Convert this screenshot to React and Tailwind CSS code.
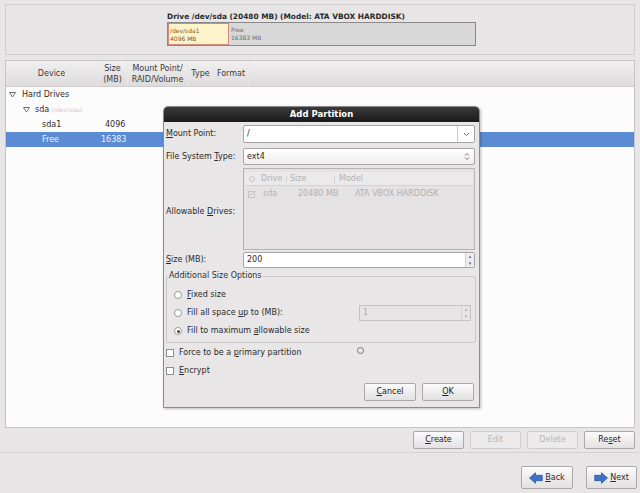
import React from "react";

function U({ children }) {
  return <span className="underline underline-offset-1">{children}</span>;
}

function Btn({ children, disabled, className = "" }) {
  return (
    <div
      className={`h-[18px] w-[51px] flex items-center justify-center rounded-[2px] border text-[8px] ${
        disabled
          ? "border-[#d0cece] bg-[#eceaea] text-[#b8b6b6]"
          : "border-[#a9a7a7] bg-gradient-to-b from-[#fbfbfb] to-[#e2e0e0] text-[#222]"
      } ${className}`}
    >
      {children}
    </div>
  );
}

function Radio({ checked }) {
  return (
    <div className="w-[8px] h-[8px] shrink-0 rounded-full border border-[#9a9898] bg-white flex items-center justify-center">
      {checked && <div className="w-[3px] h-[3px] rounded-full bg-[#444]" />}
    </div>
  );
}

function Check() {
  return <div className="w-[8px] h-[8px] shrink-0 border border-[#8f8d8d] bg-white" />;
}

function Tri() {
  return (
    <svg width="7" height="6" viewBox="0 0 7 6">
      <path d="M0.5 0.5 L6.5 0.5 L3.5 5 Z" fill="none" stroke="#6f6d6d" strokeWidth="1" />
    </svg>
  );
}

function UpDown() {
  return (
    <svg width="6" height="9" viewBox="0 0 6 9">
      <path d="M1 3.5 L3 1.5 L5 3.5 M1 5.5 L3 7.5 L5 5.5" fill="none" stroke="#666" strokeWidth="0.9" />
    </svg>
  );
}

function Arrow({ dir }) {
  return (
    <svg width="14" height="12" viewBox="0 0 14 12">
      {dir === "left" ? (
        <path d="M0.5 6 L6.5 0.7 L6.5 3.3 L13.3 3.3 L13.3 8.7 L6.5 8.7 L6.5 11.3 Z" fill="#3d73c7" stroke="#27529a" strokeWidth="0.7" strokeLinejoin="round" />
      ) : (
        <path d="M13.5 6 L7.5 0.7 L7.5 3.3 L0.7 3.3 L0.7 8.7 L7.5 8.7 L7.5 11.3 Z" fill="#3d73c7" stroke="#27529a" strokeWidth="0.7" strokeLinejoin="round" />
      )}
    </svg>
  );
}

function Dialog() {
  return (
    <div className="absolute left-[163px] top-[106px] w-[317px] h-[302px] flex flex-col bg-[#e8e6e6] border border-[#8d8b8b] rounded-t-[5px] shadow-[1px_1px_3px_rgba(0,0,0,0.25)]">
      <div className="h-[15px] bg-gradient-to-b from-[#3a3939] to-[#1c1b1b] rounded-t-[4px] flex items-center justify-center text-white font-bold text-[8.5px]">
        Add Partition
      </div>
      <div className="flex flex-col pl-[2px] pr-[4px] pt-[3px] whitespace-nowrap">
        <div className="flex items-center h-[18px]">
          <div className="w-[77px]"><U>M</U>ount Point:</div>
          <div className="flex-1 h-[18px] flex border border-[#a6a4a4] bg-white rounded-[2px]">
            <div className="flex-1 pl-[3px] flex items-center">/</div>
            <div className="w-[17px] border-l border-[#cfcdcd] flex items-center justify-center">
              <svg width="7" height="5" viewBox="0 0 7 5"><path d="M1 1 L3.5 3.5 L6 1" fill="none" stroke="#666" strokeWidth="1" /></svg>
            </div>
          </div>
        </div>
        <div className="flex items-center h-[17px] mt-[5px]">
          <div className="w-[77px]">File System <U>T</U>ype:</div>
          <div className="flex-1 h-[17px] flex items-center border border-[#a6a4a4] bg-gradient-to-b from-white to-[#f0eeee] rounded-[2px] pl-[3px] pr-[4px]">
            <div className="flex-1">ext4</div>
            <UpDown />
          </div>
        </div>
        <div className="flex items-center h-[82px] mt-[3px]">
          <div className="w-[77px] pt-[6px]">Allowable <U>D</U>rives:</div>
          <div className="flex-1 h-[82px] border border-[#b5b3b3] bg-[#e4e2e2] pt-[3px] px-[1px] text-[#b3b1b1] text-[8px]">
            <div className="h-[14px] flex items-center border-b border-[#d3d1d1] bg-[#ebe9e9]">
              <div className="w-[16px] pl-[4px] flex items-center">
                <div className="w-[6px] h-[6px] rounded-full border border-[#c4c2c2]" />
              </div>
              <div className="w-[26px] border-r border-[#d3d1d1]">Drive</div>
              <div className="w-[48px] pl-[3px] border-r border-[#d3d1d1]">Size</div>
              <div className="pl-[4px]">Model</div>
            </div>
            <div className="h-[16px] flex items-center">
              <div className="w-[16px] pl-[3px] flex items-center">
                <div className="w-[7px] h-[7px] border border-[#c4c2c2] flex items-center justify-center text-[6px] leading-none">✓</div>
              </div>
              <div className="w-[37px] pl-[2px]">sda</div>
              <div className="w-[57px]">20480 MB</div>
              <div>ATA VBOX HARDDISK</div>
            </div>
          </div>
        </div>
        <div className="flex items-center h-[16px] mt-[2px]">
          <div className="w-[77px]"><U>S</U>ize (MB):</div>
          <div className="flex-1 h-[16px] flex items-center border border-[#a6a4a4] bg-white rounded-[2px] pl-[3px]">
            <div className="flex-1">200</div>
            <div className="w-[9px] h-full border-l border-[#cfcdcd] bg-[#eeecec] flex flex-col">
              <div className="flex-1 flex items-center justify-center text-[5px] leading-none text-[#666]">▴</div>
              <div className="flex-1 flex items-center justify-center text-[5px] leading-none text-[#666]">▾</div>
            </div>
          </div>
        </div>
        <fieldset className="mt-[4px] mr-[-1px] h-[71px] border border-[#c9c7c7] rounded-[2px] pl-[7px] pt-[6px]">
          <legend className="ml-[-6px] px-[1px] text-[8px] text-[#333]">Additional Size Options</legend>
          <div className="flex items-center h-[18px] gap-[5px]">
            <Radio />
            <span><U>F</U>ixed size</span>
          </div>
          <div className="flex items-center h-[18px] gap-[5px]">
            <Radio />
            <span className="w-[167px]">Fill all space <U>u</U>p to (MB):</span>
            <div className="w-[112px] h-[16px] flex items-center border border-[#c3c1c1] bg-[#e6e4e4] pl-[3px] text-[#b0aeae]">
              <div className="flex-1">1</div>
              <div className="w-[9px] h-full border-l border-[#d3d1d1] flex flex-col text-[5px] leading-none">
                <div className="flex-1 flex items-center justify-center">▴</div>
                <div className="flex-1 flex items-center justify-center">▾</div>
              </div>
            </div>
          </div>
          <div className="flex items-center h-[18px] gap-[5px]">
            <Radio checked />
            <span>Fill to maximum <U>a</U>llowable size</span>
          </div>
        </fieldset>
        <div className="flex items-center h-[18px] mt-[1px] gap-[5px]">
          <Check />
          <span className="w-[173px]">Force to be a <U>p</U>rimary partition</span>
          <div className="w-[7px] h-[7px] rounded-full border border-[#777] -mt-[6px]" />
        </div>
        <div className="flex items-center h-[18px] gap-[5px]">
          <Check />
          <span><U>E</U>ncrypt</span>
        </div>
        <div className="flex justify-end gap-[6px] mt-[3px] pr-[1px]">
          <Btn className="w-[52px] h-[17px]"><U>C</U>ancel</Btn>
          <Btn className="w-[52px] h-[17px]"><U>O</U>K</Btn>
        </div>
      </div>
    </div>
  );
}

export default function App() {
  return (
    <div
      className="relative w-[640px] h-[493px] overflow-hidden bg-[#e7e5e5] text-[8px] text-[#2b2b2b] leading-none"
      style={{ fontFamily: '"DejaVu Sans", sans-serif' }}
    >
      <div className="mx-[5px] mt-[4px] h-[51px] border border-[#cfcdcd] pl-[161px] pt-[8px]">
        <div className="font-bold text-[7.4px]">Drive /dev/sda (20480 MB) (Model: ATA VBOX HARDDISK)</div>
        <div className="mt-[2px] w-[309px] h-[24px] flex border border-[#8a8888] text-[6px] leading-[8px]">
          <div className="w-[61px] bg-[#fdf3cb] border border-[#d68b7a] pl-[1px] pt-[3px] text-[#7a5a2a]">
            <div>/dev/sda1</div>
            <div>4096 MB</div>
          </div>
          <div className="flex-1 bg-[#d9d8d8] pl-[2px] pt-[3px] text-[#6e6c6c]">
            <div>Free</div>
            <div>16383 MB</div>
          </div>
        </div>
      </div>

      <div className="mx-[5px] mt-[5px] h-[368px] border border-[#c6c4c4] bg-[#fdfcfd] flex flex-col">
        <div className="h-[26px] flex bg-gradient-to-b from-[#f1f0f0] to-[#dddbdb] border-b border-[#d0cece] text-[#3a3a3a] leading-[11px]">
          <div className="w-[92px] flex items-center justify-center border-r border-[#e8e6e6]">Device</div>
          <div className="w-[30px] flex items-center justify-center text-center border-r border-[#e8e6e6]">Size<br />(MB)</div>
          <div className="w-[60px] flex items-center justify-center text-center border-r border-[#e8e6e6]">Mount Point/<br />RAID/Volume</div>
          <div className="w-[26px] flex items-center justify-center border-r border-[#e8e6e6]">Type</div>
          <div className="w-[35px] flex items-center justify-center border-r border-[#e8e6e6]">Format</div>
          <div className="flex-1" />
        </div>
        <div>
          <div className="h-[15px] flex items-center pl-[3px] gap-[6px]">
            <Tri />
            <span>Hard Drives</span>
          </div>
          <div className="h-[15px] flex items-center pl-[17px] gap-[5px]">
            <Tri />
            <span>sda <span className="text-[6px] text-[#c9c7c7]">(/dev/sda)</span></span>
          </div>
          <div className="h-[15px] flex items-center pl-[36px]">
            <span className="w-[63px]">sda1</span>
            <span>4096</span>
          </div>
          <div className="h-[15px] flex items-center pl-[36px] bg-[#5b8bd3] text-[#eef3fb]">
            <span className="w-[59px]">Free</span>
            <span>16383</span>
          </div>
        </div>
      </div>

      <div className="flex justify-end gap-[6px] pr-[5px] mt-[3px]">
        <Btn><U>C</U>reate</Btn>
        <Btn disabled>Edit</Btn>
        <Btn disabled>Delete</Btn>
        <Btn>Re<U>s</U>et</Btn>
      </div>

      <div className="mt-[3px] h-[1px] bg-[#d3d1d1]" />

      <div className="flex justify-end gap-[13px] pr-[3px] mt-[13px]">
        <div className="h-[23px] w-[52px] flex items-center justify-center gap-[2px] rounded-[2px] border border-[#a9a7a7] bg-gradient-to-b from-[#fbfbfb] to-[#e2e0e0]">
          <Arrow dir="left" />
          <span><U>B</U>ack</span>
        </div>
        <div className="h-[23px] w-[51px] flex items-center justify-center gap-[2px] rounded-[2px] border border-[#a9a7a7] bg-gradient-to-b from-[#fbfbfb] to-[#e2e0e0]">
          <Arrow dir="right" />
          <span><U>N</U>ext</span>
        </div>
      </div>

      <Dialog />
    </div>
  );
}
